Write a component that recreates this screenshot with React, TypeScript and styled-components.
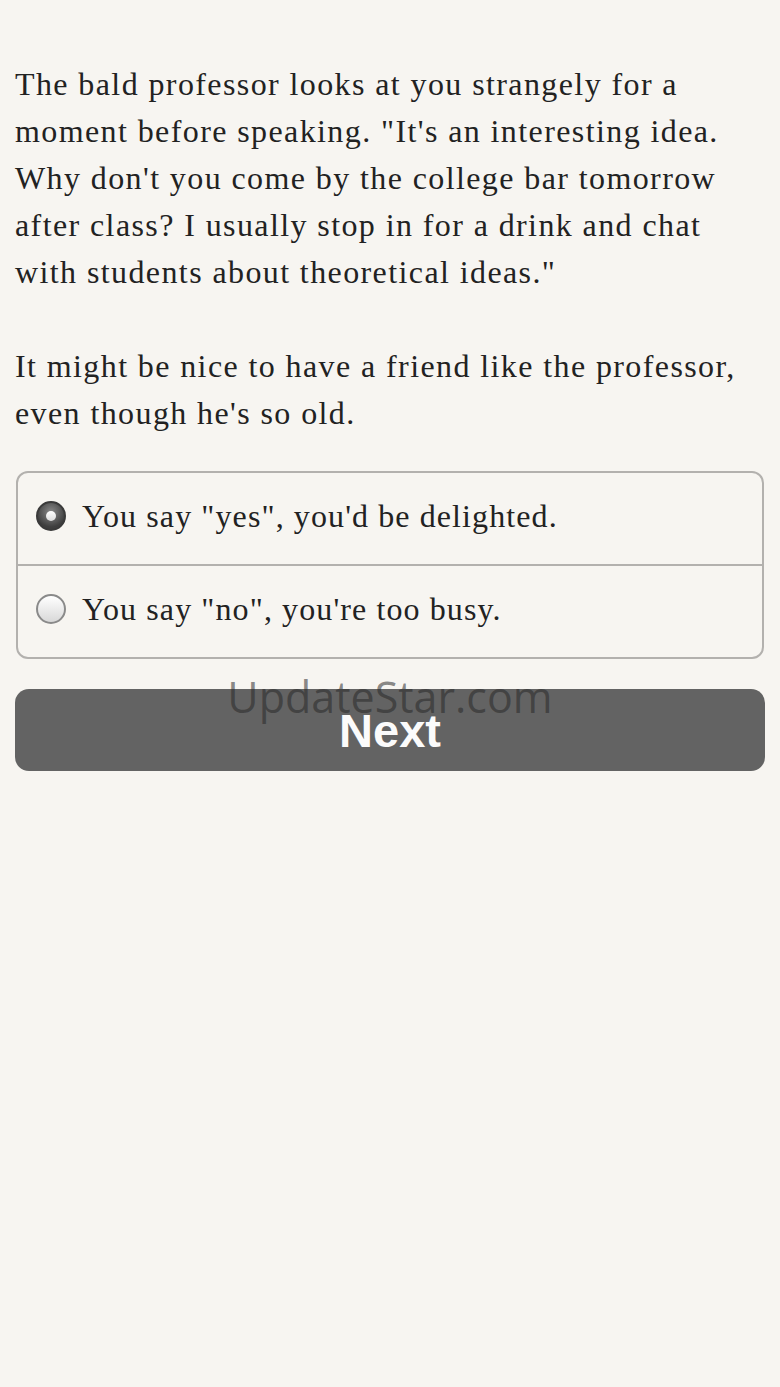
import styled, { createGlobalStyle } from 'styled-components';
import { useState } from 'react';

const GlobalStyle = createGlobalStyle`
  html, body {
    margin: 0;
    padding: 0;
    background: #f7f5f1;
  }
  body {
    font-family: 'Liberation Serif', serif;
    color: #222;
  }
`;

const choices = [
  { id: 'yes', label: 'You say "yes", you\'d be delighted.' },
  { id: 'no', label: 'You say "no", you\'re too busy.' },
];

export default function App() {
  const [selected, setSelected] = useState('yes');

  return (
    <Page>
      <GlobalStyle />
      <Story>
        <Paragraph>
          The bald professor looks at you strangely for a moment before
          speaking. "It's an interesting idea. Why don't you come by the
          college bar tomorrow after class? I usually stop in for a drink and
          chat with students about theoretical ideas."
        </Paragraph>
        <Paragraph>
          It might be nice to have a friend like the professor, even though
          he's so old.
        </Paragraph>
      </Story>
      <ChoiceList>
        {choices.map((c) => (
          <ChoiceRow key={c.id} onClick={() => setSelected(c.id)}>
            <Radio $checked={selected === c.id} />
            <ChoiceLabel>{c.label}</ChoiceLabel>
          </ChoiceRow>
        ))}
      </ChoiceList>
      <ButtonWrap>
        <NextButton>Next</NextButton>
        <Watermark>UpdateStar.com</Watermark>
      </ButtonWrap>
    </Page>
  );
}

const Page = styled.div`
  min-height: 1387px;
  box-sizing: border-box;
  padding: 61px 15px 0 15px;
`;

const Story = styled.div``;

const Paragraph = styled.p`
  margin: 0 0 47px 0;
  font-size: 32px;
  line-height: 47px;
  letter-spacing: 1.4px;
  &:last-child {
    margin-bottom: 0;
  }
`;

const ChoiceList = styled.div`
  margin: 34px 1px 0 1px;
  border: 2px solid #b3b1ae;
  border-radius: 12px;
  overflow: hidden;
`;

const ChoiceRow = styled.div`
  display: flex;
  align-items: center;
  gap: 16px;
  height: 91px;
  box-sizing: border-box;
  padding: 0 18px 5px 18px;
  cursor: pointer;

  & + & {
    border-top: 2px solid #b3b1ae;
    height: 93px;
  }
`;

const Radio = styled.span<{ $checked: boolean }>`
  width: 30px;
  height: 30px;
  flex-shrink: 0;
  box-sizing: border-box;
  border-radius: 50%;
  position: relative;
  border: 2px solid ${({ $checked }) => ($checked ? '#3a3a3a' : '#8a8a8a')};
  background: ${({ $checked }) =>
    $checked
      ? 'radial-gradient(circle at 50% 35%, #8a8a8a, #3e3e3e 70%)'
      : 'linear-gradient(#ffffff, #d8d8d8)'};

  &::after {
    content: '';
    display: ${({ $checked }) => ($checked ? 'block' : 'none')};
    position: absolute;
    left: 50%;
    top: 50%;
    width: 10px;
    height: 10px;
    margin: -5px 0 0 -5px;
    border-radius: 50%;
    background: linear-gradient(#ffffff, #dcdcdc);
  }
`;

const ChoiceLabel = styled.span`
  font-size: 32px;
  letter-spacing: 1.1px;
`;

const ButtonWrap = styled.div`
  position: relative;
  margin-top: 30px;
`;

const NextButton = styled.button`
  display: block;
  width: 100%;
  height: 82px;
  border: none;
  border-radius: 14px;
  background: #636363;
  color: #fbfbfb;
  font-family: 'Liberation Sans', Arial, sans-serif;
  font-weight: 700;
  font-size: 47px;
  padding: 0;
  cursor: pointer;
`;

const Watermark = styled.div`
  position: absolute;
  left: 0;
  right: 0;
  top: -22px;
  text-align: center;
  font-family: 'Open Sans', sans-serif;
  font-size: 43px;
  color: rgba(40, 40, 40, 0.55);
  pointer-events: none;
`;
